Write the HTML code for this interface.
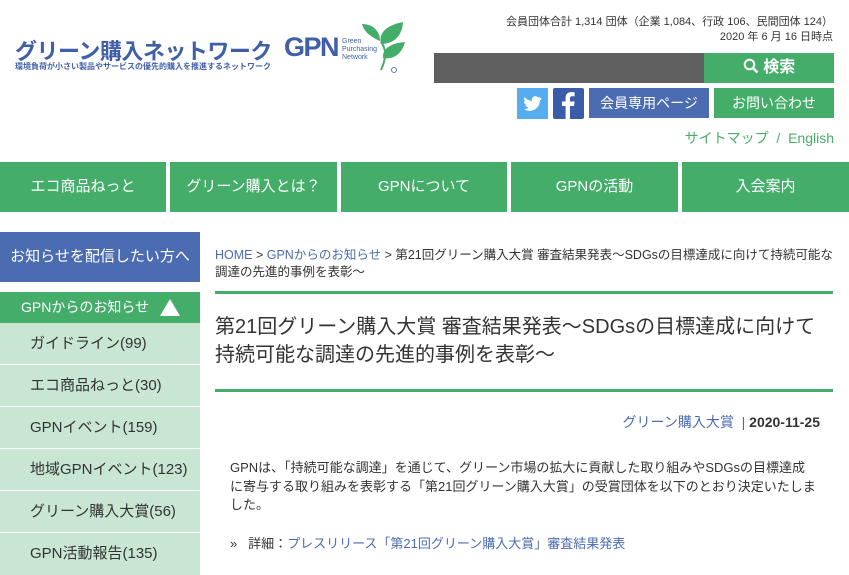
<!DOCTYPE html>
<html><head><meta charset="utf-8"><style>
*{margin:0;padding:0;box-sizing:border-box}
body{width:849px;height:575px;overflow:hidden;background:#fff;font-family:"Liberation Sans","Noto Sans CJK JP",sans-serif;color:#333;position:relative}
.a{position:absolute;white-space:nowrap}
.nav div{position:absolute;top:162px;height:50px;background:#45ad6a;color:#fff;font-size:15px;text-align:center;line-height:50px}
.side div.i{position:absolute;left:0;width:200px;height:41px;background:#c8e6d2;font-size:15px;line-height:41px;padding-left:30px;color:#333}
</style></head><body>
<div class="a" style="left:15px;top:34px;font-size:22px;font-weight:bold;color:#3f5fa8;letter-spacing:-0.5px">グリーン購入ネットワーク</div>
<div class="a" style="left:284px;top:32px;font-size:27px;font-weight:bold;color:#3f5fa8;letter-spacing:-1.5px">GPN</div>
<div class="a" style="left:342px;top:38px;font-size:7px;line-height:8px;color:#3f5fa8">Green<br>Purchasing<br>Network</div>
<svg class="a" style="left:356px;top:12px" width="56" height="62" viewBox="0 0 50 62">
<path d="M22 58 C27 47 28 38 22 30" stroke="#45ad6a" stroke-width="2" fill="none"/>
<path d="M22 32 C19 20 29 13 44 10 C43 25 34 32 22 32Z" fill="#45ad6a"/>
<path d="M24 46 C23 36 33 31 46 30 C43 42 34 48 24 46Z" fill="#45ad6a"/>
<path d="M21 29 C12 25 5 20 3 12 C14 12 21 19 21 29Z" fill="#45ad6a"/>
<circle cx="35" cy="58" r="2.5" fill="none" stroke="#3f5fa8" stroke-width="0.8"/>
</svg>
<div class="a" style="left:15px;top:61px;font-size:8px;font-weight:bold;color:#3f5fa8">環境負荷が小さい製品やサービスの優先的購入を推進するネットワーク</div>
<div class="a" style="right:16px;top:15px;font-size:11px;color:#333;text-align:right;line-height:15px">会員団体合計 1,314 団体（企業 1,084、行政 106、民間団体 124）<br>2020 年 6 月 16 日時点</div>
<div class="a" style="left:434px;top:53px;width:270px;height:30px;background:#5f5f5f"></div>
<div class="a" style="left:704px;top:53px;width:130px;height:30px;background:#45ad6a;color:#fff;font-size:16px;font-weight:bold;line-height:30px;text-align:center">
<svg width="16" height="16" viewBox="0 0 16 16" style="vertical-align:-2px"><circle cx="6.5" cy="6.5" r="4.8" fill="none" stroke="#fff" stroke-width="2"/><path d="M10 10 L14.5 14.5" stroke="#fff" stroke-width="2.4"/></svg> 検索</div>
<div class="a" style="left:517px;top:88px;width:31px;height:31px;background:#55acee"><svg width="31" height="31" viewBox="0 0 31 31"><path d="M24 10c-.7.3-1.4.5-2.1.6.8-.5 1.3-1.2 1.6-2-.7.4-1.5.7-2.3.9a3.6 3.6 0 0 0-6.2 3.3c-3-.1-5.7-1.6-7.5-3.8-.9 1.6-.4 3.6 1.1 4.8-.6 0-1.1-.2-1.6-.4 0 1.7 1.2 3.2 2.9 3.5-.5.1-1.1.2-1.6.1.5 1.4 1.8 2.5 3.4 2.5A7.3 7.3 0 0 1 7 21.2 10.3 10.3 0 0 0 22.9 12.5c.7-.5 1.3-1.1 1.8-1.8z" fill="#fff"/></svg></div>
<div class="a" style="left:553px;top:88px;width:31px;height:31px;background:#3b5ca8;border-radius:2px"><svg width="31" height="31" viewBox="0 0 31 31"><path d="M17 31V18h4l.6-4.5H17v-3c0-1.3.4-2.2 2.2-2.2h2.4V4.3c-.4-.1-1.8-.2-3.4-.2-3.4 0-5.6 2-5.6 5.8v3.6H9V18h3.6v13z" fill="#fff"/></svg></div>
<div class="a" style="left:589px;top:88px;width:120px;height:30px;background:#4b6cb0;color:#fff;font-size:14px;line-height:30px;text-align:center">会員専用ページ</div>
<div class="a" style="left:714px;top:88px;width:120px;height:30px;background:#45ad6a;color:#fff;font-size:14px;line-height:30px;text-align:center">お問い合わせ</div>
<div class="a" style="right:15px;top:128px;font-size:14px;color:#45ad6a">サイトマップ &nbsp;/&nbsp; English</div>
<div class="nav">
<div style="left:0;width:166px">エコ商品ねっと</div>
<div style="left:170px;width:167px">グリーン購入とは？</div>
<div style="left:341px;width:166px">GPNについて</div>
<div style="left:511px;width:167px">GPNの活動</div>
<div style="left:682px;width:167px">入会案内</div>
</div>
<div class="a" style="left:0;top:232px;width:200px;height:50px;background:#4b6cb0;color:#fff;font-size:15px;line-height:50px;text-align:center">お知らせを配信したい方へ</div>
<div class="a" style="left:0;top:292px;width:200px;height:31px;background:#45ad6a;color:#fff;font-size:14px;line-height:31px;padding-left:21px">GPNからのお知らせ
<svg style="position:absolute;left:160px;top:7px" width="20" height="17"><path d="M10 0 L20 17 L0 17Z" fill="#fff"/></svg></div>
<div class="side">
<div class="i" style="top:323px">ガイドライン(99)</div>
<div class="i" style="top:365px">エコ商品ねっと(30)</div>
<div class="i" style="top:407px">GPNイベント(159)</div>
<div class="i" style="top:449px">地域GPNイベント(123)</div>
<div class="i" style="top:491px">グリーン購入大賞(56)</div>
<div class="i" style="top:533px;height:42px">GPN活動報告(135)</div>
</div>
<div class="a" style="left:215px;top:247px;width:620px;font-size:12.5px;line-height:17px;white-space:normal;color:#333"><span style="color:#4b6cb0">HOME</span> &gt; <span style="color:#4b6cb0">GPNからのお知らせ</span> &gt; 第21回グリーン購入大賞 審査結果発表～SDGsの目標達成に向けて持続可能な調達の先進的事例を表彰～</div>
<div class="a" style="left:215px;top:291px;width:618px;height:3px;background:#45ad6a"></div>
<div class="a" style="left:215px;top:313px;font-size:20px;line-height:28px;color:#333">第21回グリーン購入大賞 審査結果発表～SDGsの目標達成に向けて<br>持続可能な調達の先進的事例を表彰～</div>
<div class="a" style="left:215px;top:389px;width:618px;height:3px;background:#45ad6a"></div>
<div class="a" style="right:29px;top:412px;font-size:14px;color:#4b6cb0">グリーン購入大賞 &nbsp;| <b style="color:#333">2020-11-25</b></div>
<div class="a" style="left:230px;top:459px;font-size:13px;line-height:18.5px;color:#333">GPNは、「持続可能な調達」を通じて、グリーン市場の拡大に貢献した取り組みやSDGsの目標達成<br>に寄与する取り組みを表彰する「第21回グリーン購入大賞」の受賞団体を以下のとおり決定いたしま<br>した。</div>
<div class="a" style="left:230px;top:533px;font-size:13px;color:#333">»&nbsp;&nbsp; 詳細：<span style="color:#4b6cb0">プレスリリース「第21回グリーン購入大賞」審査結果発表</span></div>
</body></html>
